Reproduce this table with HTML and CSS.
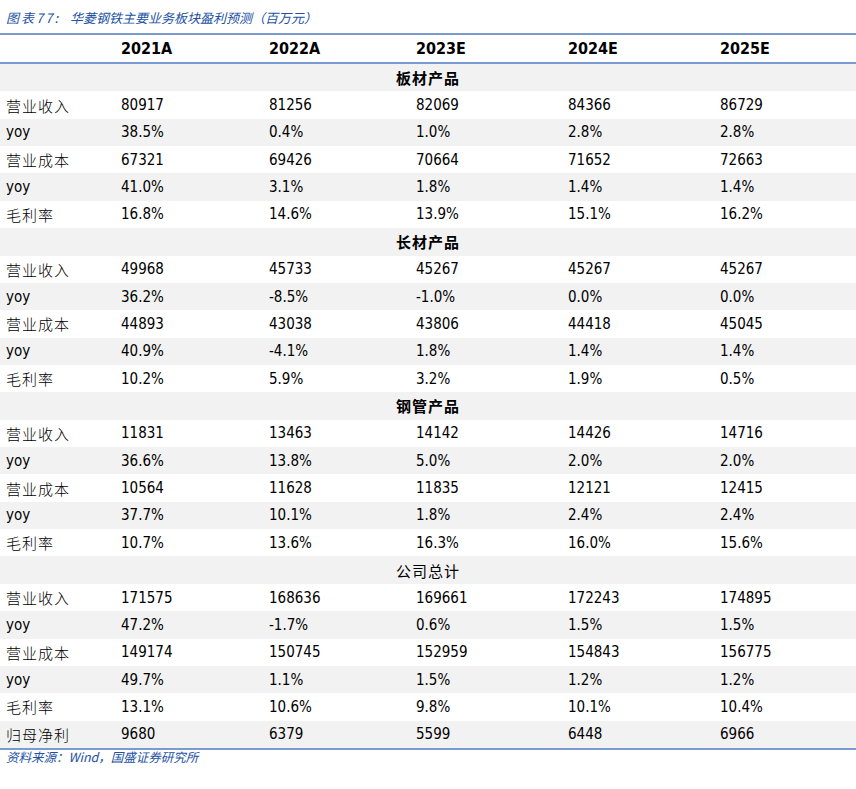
FILE: index.html
```html
<!DOCTYPE html>
<html lang="zh">
<head>
<meta charset="utf-8">
<link rel="stylesheet" href="styles.css">
</head>
<body>
<div class="page">
  <div class="title"><span class="fig">图表77:</span><span>华菱钢铁主要业务板块盈利预测（百万元）</span></div>
  <div class="table">
    <div class="row head"><div class="c"></div><div class="c">2021A</div><div class="c">2022A</div><div class="c">2023E</div><div class="c">2024E</div><div class="c">2025E</div></div>

    <div class="sec bold">板材产品</div>
    <div class="row"><div class="c zh">营业收入</div><div class="c">80917</div><div class="c">81256</div><div class="c">82069</div><div class="c">84366</div><div class="c">86729</div></div>
    <div class="row g"><div class="c">yoy</div><div class="c">38.5%</div><div class="c">0.4%</div><div class="c">1.0%</div><div class="c">2.8%</div><div class="c">2.8%</div></div>
    <div class="row"><div class="c zh">营业成本</div><div class="c">67321</div><div class="c">69426</div><div class="c">70664</div><div class="c">71652</div><div class="c">72663</div></div>
    <div class="row g"><div class="c">yoy</div><div class="c">41.0%</div><div class="c">3.1%</div><div class="c">1.8%</div><div class="c">1.4%</div><div class="c">1.4%</div></div>
    <div class="row"><div class="c zh">毛利率</div><div class="c">16.8%</div><div class="c">14.6%</div><div class="c">13.9%</div><div class="c">15.1%</div><div class="c">16.2%</div></div>

    <div class="sec bold">长材产品</div>
    <div class="row"><div class="c zh">营业收入</div><div class="c">49968</div><div class="c">45733</div><div class="c">45267</div><div class="c">45267</div><div class="c">45267</div></div>
    <div class="row g"><div class="c">yoy</div><div class="c">36.2%</div><div class="c">-8.5%</div><div class="c">-1.0%</div><div class="c">0.0%</div><div class="c">0.0%</div></div>
    <div class="row"><div class="c zh">营业成本</div><div class="c">44893</div><div class="c">43038</div><div class="c">43806</div><div class="c">44418</div><div class="c">45045</div></div>
    <div class="row g"><div class="c">yoy</div><div class="c">40.9%</div><div class="c">-4.1%</div><div class="c">1.8%</div><div class="c">1.4%</div><div class="c">1.4%</div></div>
    <div class="row"><div class="c zh">毛利率</div><div class="c">10.2%</div><div class="c">5.9%</div><div class="c">3.2%</div><div class="c">1.9%</div><div class="c">0.5%</div></div>

    <div class="sec bold">钢管产品</div>
    <div class="row"><div class="c zh">营业收入</div><div class="c">11831</div><div class="c">13463</div><div class="c">14142</div><div class="c">14426</div><div class="c">14716</div></div>
    <div class="row g"><div class="c">yoy</div><div class="c">36.6%</div><div class="c">13.8%</div><div class="c">5.0%</div><div class="c">2.0%</div><div class="c">2.0%</div></div>
    <div class="row"><div class="c zh">营业成本</div><div class="c">10564</div><div class="c">11628</div><div class="c">11835</div><div class="c">12121</div><div class="c">12415</div></div>
    <div class="row g"><div class="c">yoy</div><div class="c">37.7%</div><div class="c">10.1%</div><div class="c">1.8%</div><div class="c">2.4%</div><div class="c">2.4%</div></div>
    <div class="row"><div class="c zh">毛利率</div><div class="c">10.7%</div><div class="c">13.6%</div><div class="c">16.3%</div><div class="c">16.0%</div><div class="c">15.6%</div></div>

    <div class="sec">公司总计</div>
    <div class="row"><div class="c zh">营业收入</div><div class="c">171575</div><div class="c">168636</div><div class="c">169661</div><div class="c">172243</div><div class="c">174895</div></div>
    <div class="row g"><div class="c">yoy</div><div class="c">47.2%</div><div class="c">-1.7%</div><div class="c">0.6%</div><div class="c">1.5%</div><div class="c">1.5%</div></div>
    <div class="row"><div class="c zh">营业成本</div><div class="c">149174</div><div class="c">150745</div><div class="c">152959</div><div class="c">154843</div><div class="c">156775</div></div>
    <div class="row g"><div class="c">yoy</div><div class="c">49.7%</div><div class="c">1.1%</div><div class="c">1.5%</div><div class="c">1.2%</div><div class="c">1.2%</div></div>
    <div class="row"><div class="c zh">毛利率</div><div class="c">13.1%</div><div class="c">10.6%</div><div class="c">9.8%</div><div class="c">10.1%</div><div class="c">10.4%</div></div>
    <div class="row g"><div class="c zh">归母净利</div><div class="c">9680</div><div class="c">6379</div><div class="c">5599</div><div class="c">6448</div><div class="c">6966</div></div>
  </div>
  <div class="source">资料来源：Wind，国盛证券研究所</div>
</div>
</body>
</html>
```

FILE: styles.css
```css
html, body {
  margin: 0;
  padding: 0;
  background: #ffffff;
}

.page {
  width: 856px;
  font-family: "DejaVu Sans Condensed", "DejaVu Sans", "Noto Sans CJK SC", sans-serif;
  color: #000000;
}

.title {
  height: 33px;
  box-sizing: border-box;
  padding: 10px 0 0 6px;
  font-family: "Noto Sans CJK SC", sans-serif;
  font-style: italic;
  font-size: 13px;
  line-height: 16px;
  color: #2251a3;
  display: flex;
}

.title .fig {
  letter-spacing: 2px;
  margin-right: 10px;
}

.table {
  border-top: 2px solid #7a9bd2;
  border-bottom: 2px solid #7a9bd2;
}

.row {
  display: grid;
  grid-template-columns: 115px 148px 147px 152px 152px 1fr;
  height: 27.36px;
  align-items: center;
  font-size: 15px;
}

.row.g {
  background: #f2f2f2;
}

.row.head {
  height: 27px;
  border-bottom: 2px solid #7a9bd2;
  font-weight: bold;
  font-size: 16px;
}

.c {
  padding-left: 6px;
  white-space: nowrap;
}

.c.zh {
  font-family: "Noto Sans CJK SC", sans-serif;
  font-size: 15px;
  font-weight: 300;
  letter-spacing: 1px;
}

.sec {
  height: 27.36px;
  background: #f2f2f2;
  display: flex;
  align-items: center;
  justify-content: center;
  font-family: "Noto Sans CJK SC", sans-serif;
  font-size: 15px;
  letter-spacing: 1px;
}

.sec.bold {
  font-weight: bold;
}

.source {
  padding: 0 0 0 6px;
  font-family: "Noto Sans CJK SC", sans-serif;
  font-style: italic;
  font-size: 12.5px;
  line-height: 14px;
  color: #2251a3;
}
```
